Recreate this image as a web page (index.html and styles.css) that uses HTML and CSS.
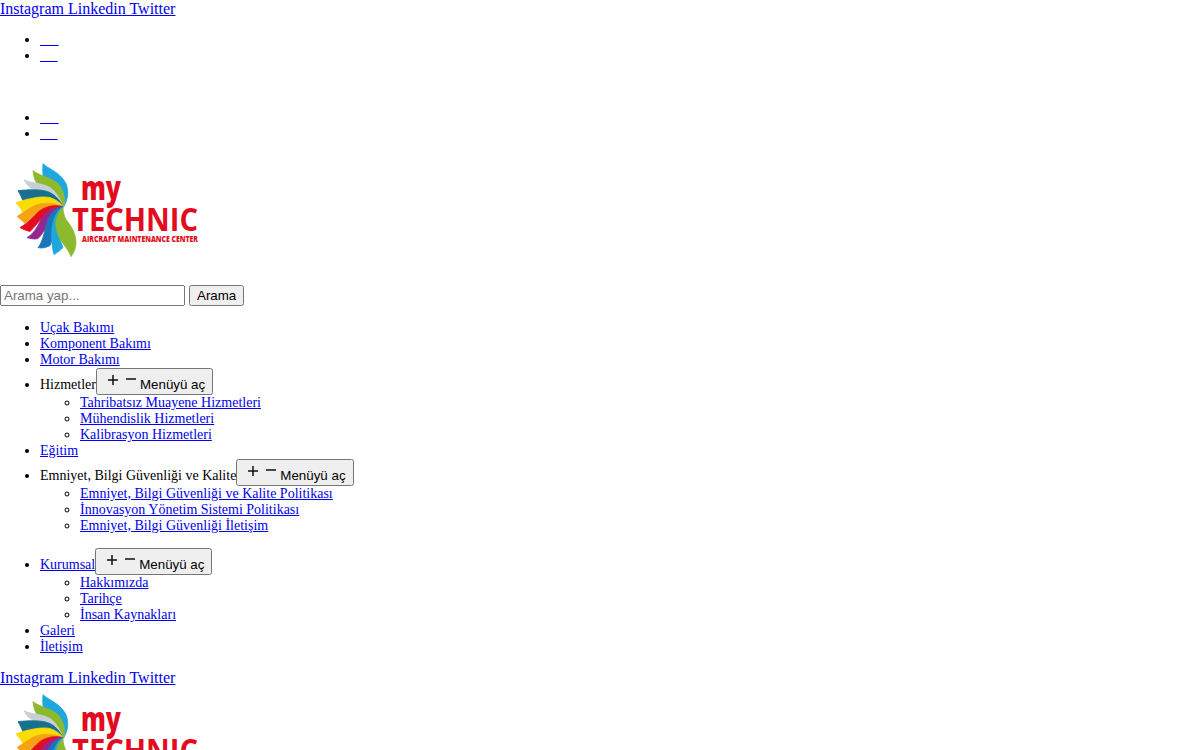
FILE: index.html
```html
<!DOCTYPE html>
<html lang="tr">
<head>
<meta charset="utf-8">
<title>myTECHNIC</title>
<link rel="stylesheet" href="styles.css">
</head>
<body>
<svg class="defs" aria-hidden="true">
  <defs>
    <symbol id="logo" viewBox="0 157 210 114">
      <g transform="translate(0 0.6)">
      <path class="petal" fill="#1ea7dc" stroke="#1ea7dc" d="M43 164C47 169 60 172 66 184C69 192 68 201 63 208C62 197 55 189 48 184C44 181 42 178 43 164Z"/>
      <path class="petal" fill="#8db92e" stroke="#8db92e" d="M33 171C37 175 50 178 57 183C63 189 66 198 64 207C59 196 50 190 42 187C36 185 34 180 33 171Z"/>
      <path class="petal" fill="#c7cfd6" stroke="#c7cfd6" d="M24 180C30 184 42 183 50 188C56 192 60 199 63 207C55 198 46 192 38 190C32 190 28 188 24 180Z"/>
      <path class="petal" fill="#17708f" stroke="#17708f" d="M18 191C28 190 42 189 50 193C56 196 60 201 63 207C55 201 47 198 40 198C33 198 28 200 23 202C22 198 20 195 18 191Z"/>
      <path class="petal" fill="#fbdc05" stroke="#fbdc05" d="M16 203C28 199 42 196 50 198C56 200 60 203 63 207C54 203 46 203 38 205C32 207 27 210 23 213C21 209 18 206 16 203Z"/>
      <path class="petal" fill="#f6a313" stroke="#f6a313" d="M17 217C25 212 33 205 42 204C50 203 57 204 63 207C54 206 47 208 41 211C35 215 30 220 25 224C23 222 20 219 17 217Z"/>
      <path class="petal" fill="#e30b20" stroke="#e30b20" d="M20 228C28 224 33 217 40 211C47 206 55 205 63 207C55 207 50 210 46 214C41 219 36 226 30 232C27 231 23 230 20 228Z"/>
      <path class="petal" fill="#93278f" stroke="#93278f" d="M27 238C33 235 37 228 41 220C45 212 53 207 63 207C56 209 52 213 50 219C47 226 44 233 38 239C34 240 30 239 27 238Z"/>
      <path class="petal" fill="#1a75bb" stroke="#1a75bb" d="M38 248C42 243 44 235 46 226C48 216 54 209 63 207C57 211 55 216 54 223C53 232 53 240 50 246C46 248 42 249 38 248Z"/>
      <path class="petal" fill="#1ea7dc" stroke="#1ea7dc" d="M54 255C52 248 51 238 52 228C53 219 57 212 63 207C59 214 57 222 58 230C59 238 61 243 63 248C60 251 57 253 54 255Z"/>
      <path class="petal" fill="#8db92e" stroke="#8db92e" d="M63 208C58 213 55 219 56 227C57 236 62 243 66 248C68 251 70 254 71 257C74 253 76 248 76 243C76 233 70 225 66 220C64 216 63 212 63 208Z"/>
      </g>
      <text class="logo-my" x="81" y="201" textLength="40" lengthAdjust="spacingAndGlyphs">my</text>
      <text class="logo-name" x="72" y="232" textLength="126" lengthAdjust="spacingAndGlyphs">TECHNIC</text>
      <text class="logo-sub" x="82" y="243" textLength="116" lengthAdjust="spacingAndGlyphs">AIRCRAFT MAINTENANCE CENTER</text>
    </symbol>
    <symbol id="plus" viewBox="0 0 18 18">
      <path d="M9 4v10M4 9h10" fill="none" stroke="#111" stroke-width="1.5"/>
    </symbol>
    <symbol id="minus" viewBox="0 0 18 18">
      <path d="M4 8h10" fill="none" stroke="#111" stroke-width="1.5"/>
    </symbol>
  </defs>
</svg>

<div class="social"><a href="#">Instagram Linkedin Twitter</a></div>

<ul class="lang">
  <li><a href="#" class="lang-a">&nbsp;&nbsp;&nbsp;&nbsp;&nbsp;</a></li>
  <li><a href="#" class="lang-b">&nbsp;&nbsp;&nbsp;&nbsp;&nbsp;</a></li>
</ul>
<div class="blank-line"></div>
<ul class="lang">
  <li><a href="#" class="lang-a">&nbsp;&nbsp;&nbsp;&nbsp;&nbsp;</a></li>
  <li><a href="#" class="lang-b">&nbsp;&nbsp;&nbsp;&nbsp;&nbsp;</a></li>
</ul>

<a href="#" class="logo-link" aria-label="myTECHNIC"><svg class="logo"><use href="#logo"/></svg></a>

<form class="search">
  <input type="text" placeholder="Arama yap..."> <button type="button">Arama</button>
</form>

<ul class="menu">
  <li><a href="#">Uçak Bakımı</a></li>
  <li><a href="#">Komponent Bakımı</a></li>
  <li><a href="#">Motor Bakımı</a></li>
  <li>Hizmetler<button type="button"><svg class="ico"><use href="#plus"/></svg><svg class="ico"><use href="#minus"/></svg>Menüyü aç</button>
    <ul>
      <li><a href="#">Tahribatsız Muayene Hizmetleri</a></li>
      <li><a href="#">Mühendislik Hizmetleri</a></li>
      <li><a href="#">Kalibrasyon Hizmetleri</a></li>
    </ul>
  </li>
  <li><a href="#">Eğitim</a></li>
  <li>Emniyet, Bilgi Güvenliği ve Kalite<button type="button"><svg class="ico"><use href="#plus"/></svg><svg class="ico"><use href="#minus"/></svg>Menüyü aç</button>
    <ul class="sub-gap">
      <li><a href="#">Emniyet, Bilgi Güvenliği ve Kalite Politikası</a></li>
      <li><a href="#">İnnovasyon Yönetim Sistemi Politikası</a></li>
      <li><a href="#">Emniyet, Bilgi Güvenliği İletişim</a></li>
    </ul>
  </li>
  <li><a href="#">Kurumsal</a><button type="button"><svg class="ico"><use href="#plus"/></svg><svg class="ico"><use href="#minus"/></svg>Menüyü aç</button>
    <ul>
      <li><a href="#">Hakkımızda</a></li>
      <li><a href="#">Tarihçe</a></li>
      <li><a href="#">İnsan Kaynakları</a></li>
    </ul>
  </li>
  <li><a href="#">Galeri</a></li>
  <li><a href="#">İletişim</a></li>
</ul>

<div class="social"><a href="#">Instagram Linkedin Twitter</a></div>

<a href="#" class="logo-link" aria-label="myTECHNIC"><svg class="logo"><use href="#logo"/></svg></a>
</body>
</html>
```
FILE: styles.css
```css
html, body {
  height: 750px;
  overflow: hidden;
}

body {
  margin: 0;
  background: #fff;
  color: #000;
  font-family: "Liberation Serif", serif;
  font-size: 16px;
}

a {
  color: #0000ee;
}

.defs {
  display: none;
}

.social {
  line-height: 18px;
}

ul {
  font-size: 14px;
  line-height: 16px;
}

.lang-a {
  word-spacing: 0.23px;
}

.lang-b {
  word-spacing: 0;
}

.blank-line {
  height: 18px;
}

.logo-link {
  display: block;
  width: 210px;
  height: 114px;
}

.logo {
  display: block;
  width: 210px;
  height: 114px;
}

.petal {
  stroke-width: 0.8px;
}

.logo-my,
.logo-name,
.logo-sub {
  font-family: "Open Sans", "Liberation Sans", sans-serif;
  fill: #e30b20;
}

.logo-my {
  font-size: 33px;
  font-weight: 800;
}

.logo-name {
  font-size: 32px;
  font-weight: 700;
}

.logo-sub {
  font-size: 9.5px;
  font-weight: 800;
}

.search {
  margin-top: 15px;
}

input,
button {
  font-family: "Liberation Sans", sans-serif;
  font-size: 13.3333px;
}

.ico {
  width: 18px;
  height: 18px;
}

.sub-gap {
  margin-bottom: 14px;
}
```
